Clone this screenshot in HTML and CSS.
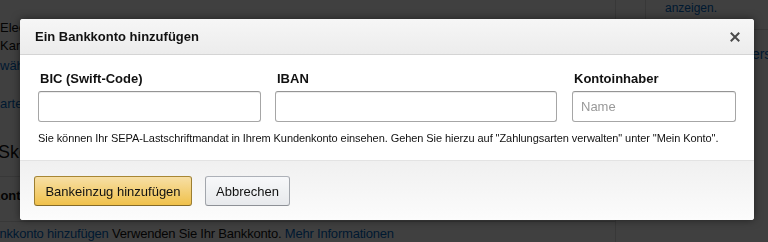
FILE: index.html
```html
<html lang="de">
<head>
  <meta charset="UTF-8">
  <meta name="viewport" content="width=device-width, initial-scale=1.0">
  <title>Bankkonto hinzufügen</title>
  <link rel="stylesheet" href="styles.css">
</head>
<body>
  <div class="page">
    <div class="main">
      <p class="lead">Electronic Cash</p>
      <p class="line">Karte oder Konto</p>
      <p class="line"><a>wählen Sie eine Zahlungsart</a></p>
      <p class="line gap"><a>arten verwalten</a></p>
      <h2 class="section">Sketch</h2>
      <p class="row-title">Konto</p>
      <p class="row-foot"><a>Bankkonto hinzufügen</a> Verwenden Sie Ihr Bankkonto. <a>Mehr Informationen</a></p>
    </div>
    <div class="side">
      <div class="side-top">
        <div class="cell"></div>
        <div class="cell wide">anzeigen.</div>
      </div>
      <div class="side-row"><a>Anders anzeigen</a></div>
    </div>
  </div>
  <div class="overlay"></div>

  <div class="modal">
    <div class="modal-head">
      <h4>Ein Bankkonto hinzufügen</h4>
      <svg class="close" width="10" height="10" viewBox="0 0 10 10">
        <path d="M1.5 1.5l7 7M8.5 1.5l-7 7" stroke="#4a4a4a" stroke-width="2" stroke-linecap="square"/>
      </svg>
    </div>
    <div class="modal-body">
      <div class="fields">
        <label class="field bic">
          <span>BIC (Swift-Code)</span>
          <input type="text">
        </label>
        <label class="field iban">
          <span>IBAN</span>
          <input type="text">
        </label>
        <label class="field owner">
          <span>Kontoinhaber</span>
          <input type="text" placeholder="Name">
        </label>
      </div>
      <p class="note">Sie können Ihr SEPA-Lastschriftmandat in Ihrem Kundenkonto einsehen. Gehen Sie hierzu auf "Zahlungsarten verwalten" unter "Mein Konto".</p>
    </div>
    <div class="modal-foot">
      <button class="btn primary">Bankeinzug hinzufügen</button>
      <button class="btn">Abbrechen</button>
    </div>
  </div>
</body>
</html>
```

FILE: styles.css
```css
* {
  padding: 0;
  margin: 0;
  box-sizing: border-box;
}
html, body {
  width: 768px;
  height: 242px;
  overflow: hidden;
}
body {
  background: #fff;
  font-family: "Liberation Sans", Arial, sans-serif;
  color: #111;
}
a {
  color: #0066c0;
}
.page {
  display: flex;
  height: 242px;
}
.main {
  flex: 1;
  overflow: hidden;
}
.main p, .main h2 {
  white-space: nowrap;
}
.lead {
  font-size: 13px;
  padding-top: 19px;
  line-height: 17px;
}
.line {
  font-size: 13px;
  line-height: 20px;
}
.line.gap {
  margin-top: 18px;
}
.section {
  font-size: 18px;
  font-weight: normal;
  margin-top: 27px;
  line-height: 22px;
  text-indent: -2px;
  border-bottom: 1px solid #ddd;
  padding-bottom: 13px;
}
.row-title {
  font-size: 13px;
  font-weight: bold;
  line-height: 20px;
  padding: 9px 0 15px;
  text-indent: -9px;
  border-bottom: 1px solid #ddd;
}
.row-foot {
  font-size: 13px;
  line-height: 18px;
  padding-top: 3px;
  text-indent: -16px;
  letter-spacing: -.2px;
}
.side {
  width: 153px;
  border-left: 1px solid #ddd;
}
.side-top {
  display: flex;
  height: 30px;
  border-bottom: 1px solid #ddd;
}
.cell {
  width: 30px;
  border-right: 1px solid #ddd;
}
.cell.wide {
  flex: 1;
  border: 0;
  font-size: 12px;
  padding: 1px 0 0 19px;
  color: #0066c0;
}
.side-row {
  font-size: 14px;
  padding: 16px 0 0 111px;
  white-space: nowrap;
}
.overlay {
  position: fixed;
  inset: 0;
  background: rgba(0, 0, 0, .75);
}
.modal {
  position: absolute;
  left: 20px;
  top: 19px;
  width: 734px;
  background: #fff;
  border-radius: 3px;
  box-shadow: 0 0 8px rgba(0, 0, 0, .5);
  overflow: hidden;
}
.modal-head {
  display: flex;
  align-items: center;
  justify-content: space-between;
  height: 36px;
  padding: 0 14px 0 15px;
  background: linear-gradient(#f6f6f6, #ececec);
  border-bottom: 1px solid #d4d4d4;
}
.modal-head h4 {
  font-size: 13px;
  color: #111;
}
.close {
  display: block;
  margin-top: 1px;
}
.modal-body {
  padding: 16px 18px 0 18px;
  height: 105px;
}
.fields {
  display: flex;
  gap: 14px;
}
.field {
  display: flex;
  flex-direction: column;
  gap: 4px;
}
.field span {
  font-size: 13px;
  font-weight: bold;
  line-height: 16px;
  padding-left: 2px;
  color: #111;
}
.field input {
  height: 31px;
  border: 1px solid #a6a6a6;
  border-top-color: #949494;
  border-radius: 3px;
  box-shadow: inset 0 1px 0 rgba(0, 0, 0, .07);
  font-family: inherit;
  font-size: 13px;
  padding: 0 8px;
}
.field input::placeholder {
  color: #999;
}
.bic input {
  width: 223px;
}
.iban input {
  width: 282px;
}
.owner {
  margin-left: 1px;
}
.owner input {
  width: 164px;
}
.note {
  font-size: 11px;
  color: #111;
  margin-top: 9px;
  line-height: 14px;
  letter-spacing: -.07px;
}
.modal-foot {
  display: flex;
  gap: 13px;
  height: 60px;
  padding: 15px 14px 0;
  background: linear-gradient(#f0f0f0, #fcfcfc);
  border-top: 1px solid #e3e3e3;
}
.btn {
  height: 30px;
  border-radius: 3px;
  font-family: inherit;
  font-size: 13px;
  color: #111;
  padding: 0 10px;
  white-space: nowrap;
  border: 1px solid;
  border-color: #adb1b8 #a2a6ac #8d9096;
  background: linear-gradient(#f7f8fa, #e7e9ec);
}
.btn.primary {
  width: 158px;
  padding: 0;
  border-color: #a88734 #9c7e31 #846a29;
  background: linear-gradient(#f7dfa5, #f0c14b);
}
```
